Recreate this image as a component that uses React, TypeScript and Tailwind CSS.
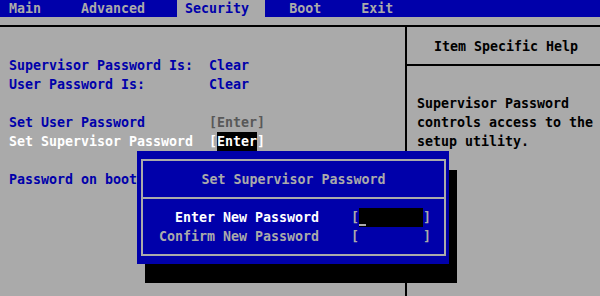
import React from 'react';

const tabs = ['Main', 'Advanced', 'Security', 'Boot', 'Exit'];
const activeTab = 'Security';

const fields: { label: string; value?: string; kind: 'info' | 'item' | 'selected' | 'blank' }[] = [
    { label: 'Supervisor Password Is:', value: 'Clear', kind: 'info' },
    { label: 'User Password Is:', value: 'Clear', kind: 'info' },
    { label: '', kind: 'blank' },
    { label: 'Set User Password', value: 'Enter', kind: 'item' },
    { label: 'Set Supervisor Password', value: 'Enter', kind: 'selected' },
    { label: '', kind: 'blank' },
    { label: 'Password on boot', kind: 'info' },
];

const helpLines = ['Supervisor Password', 'controls access to the', 'setup utility.'];

const FieldRow: React.FC<{ row: (typeof fields)[number] }> = ({ row }) => {
    if (row.kind === 'blank') return <div className="h-[19px]" />;

    if (row.kind === 'selected') {
        return (
            <div className="grid grid-cols-[200px_1fr] text-white">
                <span>{row.label}</span>
                <span className="flex">
                    <span>[</span>
                    <span className="bg-black">{row.value}</span>
                    <span>]</span>
                </span>
            </div>
        );
    }

    if (row.kind === 'item') {
        return (
            <div className="grid grid-cols-[200px_1fr] text-[#0000aa]">
                <span>{row.label}</span>
                <span className="text-[#585858]">[{row.value}]</span>
            </div>
        );
    }

    return (
        <div className="grid grid-cols-[200px_1fr] text-[#0000aa]">
            <span>{row.label}</span>
            {row.value && <span>{row.value}</span>}
        </div>
    );
};

const PasswordDialog: React.FC = () => {
    return (
        <>
            {/* shadow, one cell down and right */}
            <div className="absolute left-[145px] top-[170px] w-[312px] h-[113px] bg-black" />
            <div className="absolute left-[137px] top-[151px] w-[312px] h-[113px] bg-[#0000aa] pl-[4px] pr-[3px] py-[8px]">
                <div className="h-full border-2 border-[#aaaaaa]">
                    <div className="pt-[9px] pb-[8px] text-center text-[#aaaaaa]">Set Supervisor Password</div>
                    <div className="border-t-2 border-[#aaaaaa] pt-[9px]">
                        <div className="flex">
                            <span className="w-[176px] text-right text-white">Enter New Password</span>
                            <span className="ml-[32px] text-[#aaaaaa]">[</span>
                            <span className="relative w-[64px] bg-black">
                                <span className="absolute left-0 bottom-[1px] w-[7px] h-[2px] bg-[#aaaaaa]" />
                            </span>
                            <span className="text-[#aaaaaa]">]</span>
                        </div>
                        <div className="flex text-[#aaaaaa]">
                            <span className="w-[176px] text-right">Confirm New Password</span>
                            <span className="ml-[32px]">[</span>
                            <span className="w-[64px]" />
                            <span>]</span>
                        </div>
                    </div>
                </div>
            </div>
        </>
    );
};

export default function App() {
    return (
        <div
            className="relative w-[600px] h-[296px] overflow-hidden bg-[#aaaaaa] text-[13.3px] leading-[19px] font-bold whitespace-pre"
            style={{ fontFamily: '"DejaVu Sans Mono", "Liberation Mono", monospace' }}
        >
            <div className="flex h-[17px] gap-[40px] bg-[#0000aa] pl-[9px] leading-[17px]">
                {tabs.map((tab) =>
                    tab === activeTab ? (
                        <span key={tab} className="-ml-2 -mr-4 bg-[#aaaaaa] pl-2 pr-4 text-[#0000aa]">
                            {tab}
                        </span>
                    ) : (
                        <span key={tab} className="text-[#aaaaaa]">
                            {tab}
                        </span>
                    )
                )}
            </div>

            <div className="mt-[8px] flex h-[271px] border-t-2 border-black">
                <div className="w-[407px] border-r-2 border-black pl-[9px] pt-[29px]">
                    {fields.map((row, i) => (
                        <FieldRow key={i} row={row} />
                    ))}
                </div>
                <div className="flex-1">
                    <div className="border-b-2 border-black pt-[10px] pb-[8px] pl-[27px] text-black">Item Specific Help</div>
                    <div className="pl-[10px] pt-[28px] text-black">
                        {helpLines.map((line) => (
                            <div key={line}>{line}</div>
                        ))}
                    </div>
                </div>
            </div>

            <PasswordDialog />
        </div>
    );
}
